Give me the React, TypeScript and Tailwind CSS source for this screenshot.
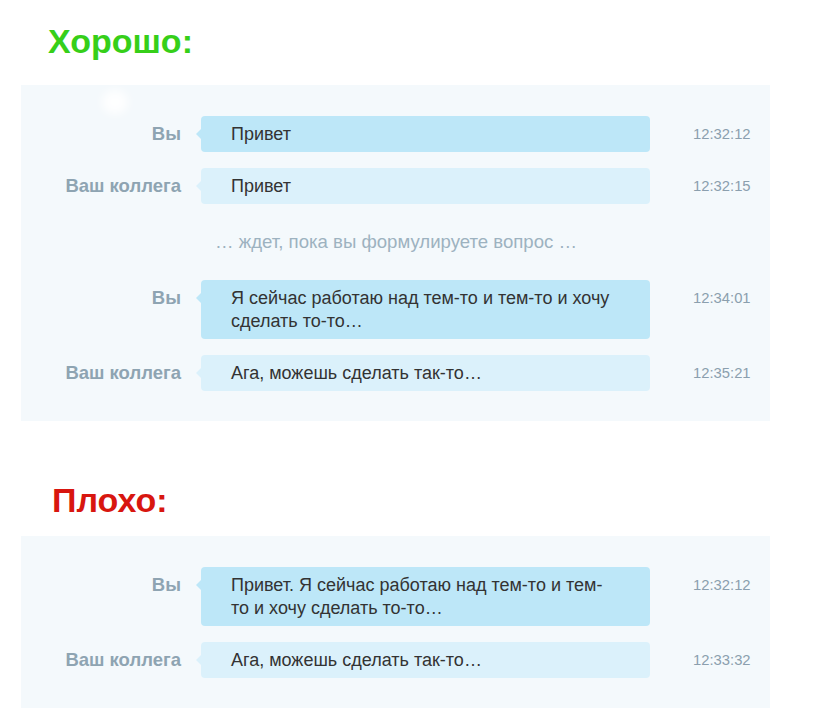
type Msg = { who: "me" | "them"; text: string; time: string } | { typing: string };

const good: Msg[] = [
  { who: "me", text: "Привет", time: "12:32:12" },
  { who: "them", text: "Привет", time: "12:32:15" },
  { typing: "… ждет, пока вы формулируете вопрос …" },
  { who: "me", text: "Я сейчас работаю над тем-то и тем-то и хочу сделать то-то…", time: "12:34:01" },
  { who: "them", text: "Ага, можешь сделать так-то…", time: "12:35:21" },
];

const bad: Msg[] = [
  { who: "me", text: "Привет. Я сейчас работаю над тем-то и тем-то и хочу сделать то-то…", time: "12:32:12" },
  { who: "them", text: "Ага, можешь сделать так-то…", time: "12:33:32" },
];

function Row({ m }: { m: Msg }) {
  if ("typing" in m) {
    return (
      <div className="flex h-[44px] items-center pl-[194px] text-[18.6px] text-[#9db2c0]">{m.typing}</div>
    );
  }
  const me = m.who === "me";
  return (
    <div className="flex items-start">
      <div className="w-[160px] shrink-0 pt-[6px] text-right text-[18.5px] font-bold leading-[23px] text-[#8ea4b2]">
        {me ? "Вы" : "Ваш коллега"}
      </div>
      <div
        className={`relative ml-[20px] w-[449px] rounded-[4px] py-[6.5px] pl-[30px] pr-[30px] text-[18px] leading-[23px] text-[#333] ${
          me ? "bg-[#bde7f8]" : "bg-[#dbf1fb]"
        }`}
      >
        <span
          className={`absolute left-[-5px] top-[13px] h-0 w-0 border-y-[5px] border-r-[5px] border-y-transparent ${
            me ? "border-r-[#bde7f8]" : "border-r-[#dbf1fb]"
          }`}
        />
        {m.text}
      </div>
      <div className="ml-[43px] pt-[7px] text-[14.8px] leading-[22px] text-[#8b9fae]">{m.time}</div>
    </div>
  );
}

function Panel({ items, glow }: { items: Msg[]; glow?: boolean }) {
  return (
    <div className="relative ml-[21px] flex w-[749px] flex-col gap-[16px] bg-[#f4f9fc] pb-[30px] pt-[31px]">
      {glow && (
        <span className="pointer-events-none absolute left-[81px] top-[5px] h-[24px] w-[26px] rounded-full bg-white/90 blur-[5px]" />
      )}
      {items.map((m, i) => (
        <Row key={i} m={m} />
      ))}
    </div>
  );
}

export default function App() {
  return (
    <div className="h-[725px] w-[815px] overflow-hidden bg-white font-['Liberation_Sans',Arial,sans-serif]">
      <h2 className="ml-[48px] pt-[24px] text-[34px] font-bold leading-[34px] text-[#36cf19]">Хорошо:</h2>
      <div className="mt-[27px]">
        <Panel items={good} glow />
      </div>
      <h2 className="ml-[52px] mt-[62px] text-[34px] font-bold leading-[34px] text-[#d8160f]">Плохо:</h2>
      <div className="mt-[19px]">
        <Panel items={bad} />
      </div>
    </div>
  );
}
